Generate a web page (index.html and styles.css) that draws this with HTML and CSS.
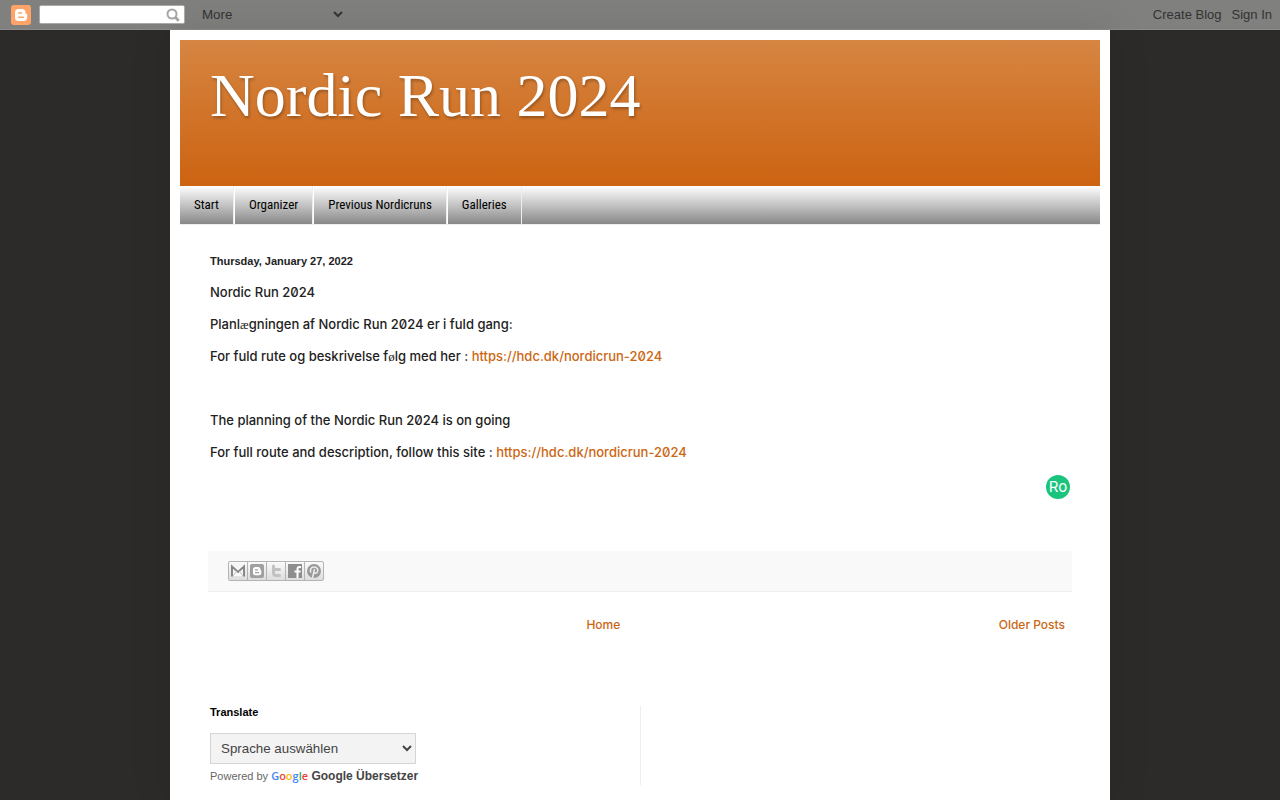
FILE: index.html
```html
<!DOCTYPE html>
<html lang="en">
<head>
    <meta charset="UTF-8">
    <meta name="viewport" content="width=device-width, initial-scale=1.0">
    <title>Nordic Run 2024</title>
    <link rel="stylesheet" href="styles.css">
</head>
<body>
<div class="navbar">
    <a class="blogger" href="#" aria-label="Blogger">
        <svg width="20" height="20" viewBox="0 0 20 20">
            <rect width="20" height="20" rx="3" fill="#ffa468"/>
            <path fill="#fff" d="M7.500 4h3.500a3.500 3.500 0 0 1 3.500 3.500c0 1 .3 1.200 1 1.200.4 0 .6.300.6.700v3.100a3.600 3.600 0 0 1-3.600 3.600h-5A3.600 3.600 0 0 1 4 12.500v-5A3.500 3.500 0 0 1 7.500 4z"/>
            <path stroke="#ffa468" stroke-width="1.600" stroke-linecap="round" d="M7.700 8h2.800M7.700 12.200h4.700"/>
        </svg>
    </a>
    <form class="search">
        <input type="text" aria-label="Search this blog">
        <button type="button" aria-label="Search">
            <svg width="14" height="14" viewBox="0 0 14 14" fill="none" stroke="#a5a5a5">
                <circle cx="6" cy="6" r="4.500" stroke-width="2"/>
                <path stroke-width="3" d="M9.300 9.300L12.700 12.700"/>
            </svg>
        </button>
    </form>
    <select class="more" aria-label="More">
        <option>More</option>
    </select>
    <div class="account">
        <a href="#">Create Blog</a>
        <a href="#">Sign In</a>
    </div>
</div>

<div class="content">
    <header class="header">
        <h1>Nordic Run 2024</h1>
    </header>
    <nav class="tabs">
        <a href="#">Start</a>
        <a href="#">Organizer</a>
        <a href="#">Previous Nordicruns</a>
        <a href="#">Galleries</a>
    </nav>

    <main class="main">
        <h2 class="date">Thursday, January 27, 2022</h2>
        <article class="post">
            <p>Nordic Run 2024</p>
            <p>Planl<span class="alt">æ</span>gningen af Nordic Run 2024 er i fuld gang:</p>
            <p>For fuld rute og beskrivelse f<span class="alt">ø</span>lg med her : <a href="#">https://hdc.dk/nordicrun-2024</a></p>
            <p><br></p>
            <p>The planning of the Nordic Run 2024 is on going</p>
            <p>For full route and description, follow this site : <a href="#">https://hdc.dk/nordicrun-2024</a></p>
            <div class="badge-row"><span class="badge">Ro</span></div>
        </article>
        <div class="post-footer">
            <div class="share">
                <a href="#" aria-label="Email This">
                    <svg viewBox="0 0 18 18">
                        <path fill="#f8f8f8" d="M2 4h14v10H2z"/>
                        <path fill="none" stroke="#888" stroke-width="2" d="M3 14.500V4.500l6 5.500 6-5.500v10"/>
                        <path fill="none" stroke="#c4c4c4" d="M4 14l3.500-4.500M14 14l-3.500-4.500"/>
                    </svg>
                </a>
                <a href="#" aria-label="BlogThis!">
                    <svg viewBox="0 0 18 18">
                        <rect x="2" y="2" width="14" height="14" rx="2" fill="#a0a0a0"/>
                        <path fill="#fff" d="M7.500 5H10a2.500 2.500 0 0 1 2.500 2.500c0 .7.200 1 .8 1v2.300a2.500 2.500 0 0 1-2.500 2.500H7.500A2.500 2.500 0 0 1 5 10.800V7.500A2.500 2.500 0 0 1 7.500 5z"/>
                        <path stroke="#a0a0a0" stroke-width="1.200" d="M7 7.800h3M7 10.700h4"/>
                    </svg>
                </a>
                <a href="#" aria-label="Share to Twitter">
                    <svg viewBox="0 0 18 18">
                        <path fill="none" stroke="#c2c2c2" stroke-width="3" stroke-linecap="round" stroke-linejoin="round" d="M6.500 4v7a2.500 2.500 0 0 0 2.500 2.500h3.500M6.500 7.500h6"/>
                    </svg>
                </a>
                <a href="#" aria-label="Share to Facebook">
                    <svg viewBox="0 0 18 18">
                        <path fill="#8e8e8e" d="M2 2h14v14H2z"/>
                        <path fill="none" stroke="#fff" stroke-width="2" d="M15 5h-1.500c-1.500 0-2 .6-2 2v9M8.500 9.500h6"/>
                    </svg>
                </a>
                <a href="#" aria-label="Share to Pinterest">
                    <svg viewBox="0 0 18 18">
                        <circle cx="9" cy="9" r="7" fill="#999"/>
                        <path fill="none" stroke="#eee" stroke-width="1.500" d="M6 10.500C4.500 8 6 5 9 5s4.500 2.500 3.500 4.700c-.8 2-3 2-3.700.6M9.500 7l-2 9"/>
                    </svg>
                </a>
            </div>
        </div>
        <div class="pager">
            <div class="home"><a href="#">Home</a></div>
            <a href="#">Older Posts</a>
        </div>
    </main>

    <footer class="columns">
        <section class="column">
            <h2>Translate</h2>
            <select class="language" aria-label="Translate">
                <option>Sprache auswählen</option>
            </select>
            <div class="powered">
                Powered by
                <a href="#"><span class="google"><i class="blue">G</i><i class="red">o</i><i class="yellow">o</i><i class="blue">g</i><i class="green">l</i><i class="red">e</i></span> Google Übersetzer</a>
            </div>
        </section>
        <section class="column"></section>
    </footer>
</div>
</body>
</html>
```
FILE: styles.css
```css
* {
    box-sizing: border-box;
}

body {
    margin: 0;
    background-color: #2c2b29;
    color: #222;
    font-family: Inter, sans-serif;
    font-size: 13px;
    line-height: 18px;
}

a {
    color: #cc6611;
    text-decoration: none;
}

.navbar {
    display: flex;
    align-items: center;
    height: 30px;
    padding: 0 8px 0 11px;
    background-color: #80807e;
    border-bottom: 1px solid #8c8c8c;
    font-family: "Liberation Sans", sans-serif;
}

.blogger {
    height: 20px;
    margin-right: 8px;
}

.search {
    display: flex;
    width: 146px;
    height: 19px;
    border: 1px solid #aaa;
    border-radius: 2px;
    background-color: #fff;
}

.search input {
    flex: 1;
    min-width: 0;
    padding: 0 4px;
    border: none;
    background: none;
}

.search button {
    width: 22px;
    padding: 0;
    border: none;
    background: none;
    line-height: 0;
}

.more {
    width: 148px;
    margin-left: 13px;
    border: none;
    background: none;
    color: #333;
    font-family: "Liberation Sans", sans-serif;
}

.account {
    display: flex;
    gap: 10px;
    margin-left: auto;
}

.account a {
    color: #333;
}

.content {
    max-width: 940px;
    min-height: calc(100vh - 30px);
    margin: 0 auto;
    padding: 10px;
    background-color: #fff;
    box-shadow: 0 0 40px rgba(0, 0, 0, 0.1);
}

.header {
    height: 146px;
    padding: 21px 30px;
    background: linear-gradient(#d68542, #cc6311);
}

.header h1 {
    margin: 0;
    color: #fff;
    font: 62px/68px "Liberation Serif", serif;
    text-shadow: 1px 2px 3px rgba(0, 0, 0, 0.3);
}

.tabs {
    display: flex;
    height: 39px;
    border-bottom: 1px solid #eee;
    background: linear-gradient(#fff, #888);
}

.tabs a {
    padding: 10px 14px;
    border-right: 1px solid #eee;
    color: #000;
    font: 13px/18px "Roboto Condensed", "Liberation Sans", sans-serif;
}

.tabs a + a {
    border-left: 1px solid #fff;
}

.main {
    padding: 27px 28px 0;
}

.date {
    margin: 0 2px 13px;
    font: bold 11px/18px "Liberation Sans", sans-serif;
}

.post {
    padding: 0 2px 52px;
    font-weight: 500;
    font-variant-numeric: slashed-zero;
}

.post p {
    margin: 0 0 14px;
}

.alt {
    font-family: "Liberation Serif", serif;
    font-weight: normal;
    line-height: 1;
}

.badge-row {
    display: flex;
    justify-content: flex-end;
}

.badge {
    width: 24px;
    height: 24px;
    border-radius: 50%;
    background-color: #1bc47d;
    color: #fff;
    font: 15px/24px Inter, sans-serif;
    text-align: center;
}

.post-footer {
    padding: 10px 20px;
    border-bottom: 1px solid #eee;
    background-color: #f9f9f9;
}

.share {
    display: flex;
    width: 96px;
    height: 20px;
    border: 1px solid #b4b4b4;
    border-radius: 2px;
    background: linear-gradient(#fafafa, #ddd);
}

.share a {
    flex: 1;
    height: 18px;
}

.share a + a {
    border-left: 1px solid #b4b4b4;
}

.share svg {
    display: block;
    width: 18px;
    height: 18px;
}

.pager {
    display: flex;
    padding: 24px 7px 0 0;
    font-size: 12px;
    font-weight: 500;
}

.home {
    flex: 1;
    text-align: center;
}

.columns {
    display: grid;
    grid-template-columns: 1fr 1fr;
    margin-top: 72px;
    padding: 0 30px;
}

.column {
    min-height: 79px;
}

.column + .column {
    border-left: 1px solid #eee;
}

.column h2 {
    margin: 0 0 14px;
    color: #000;
    font: bold 11px/13px "Liberation Sans", sans-serif;
}

.language {
    display: block;
    width: 206px;
    height: 31px;
    padding: 0 6px;
    border: 1px solid #d5d5d5;
    background-color: #f3f3f3;
    color: #444;
    font-family: "Liberation Sans", sans-serif;
}

.powered {
    padding-top: 3px;
    color: #666;
    font: 11px/18px "Liberation Sans", sans-serif;
}

.powered a {
    color: #444;
    font-size: 12px;
    font-weight: bold;
}

.google {
    font: 600 11px "Open Sans", sans-serif;
}

.google i {
    font-style: normal;
}

.blue {
    color: #4285f4;
}

.red {
    color: #ea4335;
}

.yellow {
    color: #fbbc05;
}

.green {
    color: #34a853;
}
```
